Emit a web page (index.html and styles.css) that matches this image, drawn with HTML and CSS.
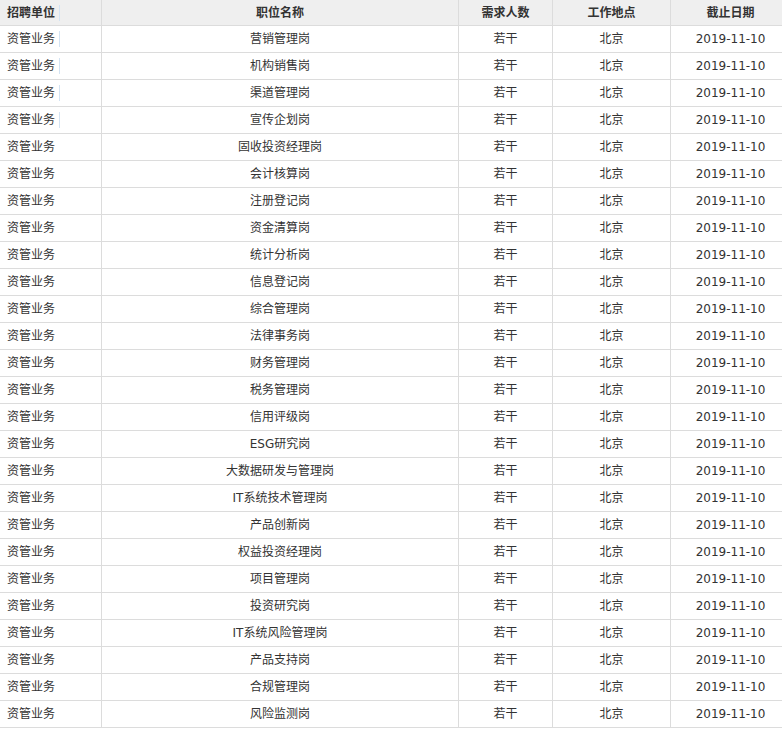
FILE: index.html
```html
<!DOCTYPE html>
<html lang="zh">
<head>
<meta charset="utf-8">
<title>招聘职位</title>
<link rel="stylesheet" href="styles.css">
</head>
<body>
<div class="wrap">
  <div class="grid">
    <div class="cell head left"><span class="mark">招聘单位</span></div>
    <div class="cell head">职位名称</div>
    <div class="cell head">需求人数</div>
    <div class="cell head">工作地点</div>
    <div class="cell head">截止日期</div>

    <div class="cell left"><span class="mark">资管业务</span></div><div class="cell">营销管理岗</div><div class="cell">若干</div><div class="cell">北京</div><div class="cell">2019-11-10</div>
    <div class="cell left"><span class="mark">资管业务</span></div><div class="cell">机构销售岗</div><div class="cell">若干</div><div class="cell">北京</div><div class="cell">2019-11-10</div>
    <div class="cell left"><span class="mark">资管业务</span></div><div class="cell">渠道管理岗</div><div class="cell">若干</div><div class="cell">北京</div><div class="cell">2019-11-10</div>
    <div class="cell left"><span class="mark">资管业务</span></div><div class="cell">宣传企划岗</div><div class="cell">若干</div><div class="cell">北京</div><div class="cell">2019-11-10</div>
    <div class="cell left">资管业务</div><div class="cell">固收投资经理岗</div><div class="cell">若干</div><div class="cell">北京</div><div class="cell">2019-11-10</div>
    <div class="cell left">资管业务</div><div class="cell">会计核算岗</div><div class="cell">若干</div><div class="cell">北京</div><div class="cell">2019-11-10</div>
    <div class="cell left">资管业务</div><div class="cell">注册登记岗</div><div class="cell">若干</div><div class="cell">北京</div><div class="cell">2019-11-10</div>
    <div class="cell left">资管业务</div><div class="cell">资金清算岗</div><div class="cell">若干</div><div class="cell">北京</div><div class="cell">2019-11-10</div>
    <div class="cell left">资管业务</div><div class="cell">统计分析岗</div><div class="cell">若干</div><div class="cell">北京</div><div class="cell">2019-11-10</div>
    <div class="cell left">资管业务</div><div class="cell">信息登记岗</div><div class="cell">若干</div><div class="cell">北京</div><div class="cell">2019-11-10</div>
    <div class="cell left">资管业务</div><div class="cell">综合管理岗</div><div class="cell">若干</div><div class="cell">北京</div><div class="cell">2019-11-10</div>
    <div class="cell left">资管业务</div><div class="cell">法律事务岗</div><div class="cell">若干</div><div class="cell">北京</div><div class="cell">2019-11-10</div>
    <div class="cell left">资管业务</div><div class="cell">财务管理岗</div><div class="cell">若干</div><div class="cell">北京</div><div class="cell">2019-11-10</div>
    <div class="cell left">资管业务</div><div class="cell">税务管理岗</div><div class="cell">若干</div><div class="cell">北京</div><div class="cell">2019-11-10</div>
    <div class="cell left">资管业务</div><div class="cell">信用评级岗</div><div class="cell">若干</div><div class="cell">北京</div><div class="cell">2019-11-10</div>
    <div class="cell left">资管业务</div><div class="cell">ESG研究岗</div><div class="cell">若干</div><div class="cell">北京</div><div class="cell">2019-11-10</div>
    <div class="cell left">资管业务</div><div class="cell">大数据研发与管理岗</div><div class="cell">若干</div><div class="cell">北京</div><div class="cell">2019-11-10</div>
    <div class="cell left">资管业务</div><div class="cell">IT系统技术管理岗</div><div class="cell">若干</div><div class="cell">北京</div><div class="cell">2019-11-10</div>
    <div class="cell left">资管业务</div><div class="cell">产品创新岗</div><div class="cell">若干</div><div class="cell">北京</div><div class="cell">2019-11-10</div>
    <div class="cell left">资管业务</div><div class="cell">权益投资经理岗</div><div class="cell">若干</div><div class="cell">北京</div><div class="cell">2019-11-10</div>
    <div class="cell left">资管业务</div><div class="cell">项目管理岗</div><div class="cell">若干</div><div class="cell">北京</div><div class="cell">2019-11-10</div>
    <div class="cell left">资管业务</div><div class="cell">投资研究岗</div><div class="cell">若干</div><div class="cell">北京</div><div class="cell">2019-11-10</div>
    <div class="cell left">资管业务</div><div class="cell">IT系统风险管理岗</div><div class="cell">若干</div><div class="cell">北京</div><div class="cell">2019-11-10</div>
    <div class="cell left">资管业务</div><div class="cell">产品支持岗</div><div class="cell">若干</div><div class="cell">北京</div><div class="cell">2019-11-10</div>
    <div class="cell left">资管业务</div><div class="cell">合规管理岗</div><div class="cell">若干</div><div class="cell">北京</div><div class="cell">2019-11-10</div>
    <div class="cell left">资管业务</div><div class="cell">风险监测岗</div><div class="cell">若干</div><div class="cell">北京</div><div class="cell">2019-11-10</div>
  </div>
</div>
</body>
</html>
```

FILE: styles.css
```css
html, body {
  margin: 0;
  padding: 0;
  background: #fff;
  overflow: hidden;
}

.wrap {
  width: 782px;
  overflow: hidden;
}

.grid {
  display: grid;
  grid-template-columns: 102px 357px 94px 118px 120px;
  width: 791px;
  font-family: "DejaVu Sans", "Noto Sans CJK SC", sans-serif;
  font-size: 12px;
  color: #333;
}

.cell {
  box-sizing: border-box;
  height: 27px;
  padding-top: 1px;
  line-height: 25px;
  border-right: 1px solid #dcdcdc;
  border-bottom: 1px solid #dcdcdc;
  text-align: center;
  white-space: nowrap;
  overflow: hidden;
}

.cell.head {
  height: 26px;
  padding-top: 1px;
  line-height: 24px;
  background: #efefef;
  font-weight: bold;
  color: #333;
}

.cell.left {
  text-align: left;
  padding-left: 7px;
}

.mark {
  display: inline-block;
  line-height: 16px;
  padding-right: 4px;
  border-right: 1px solid #d3e3f3;
  vertical-align: middle;
  position: relative;
  top: -1px;
}
```
